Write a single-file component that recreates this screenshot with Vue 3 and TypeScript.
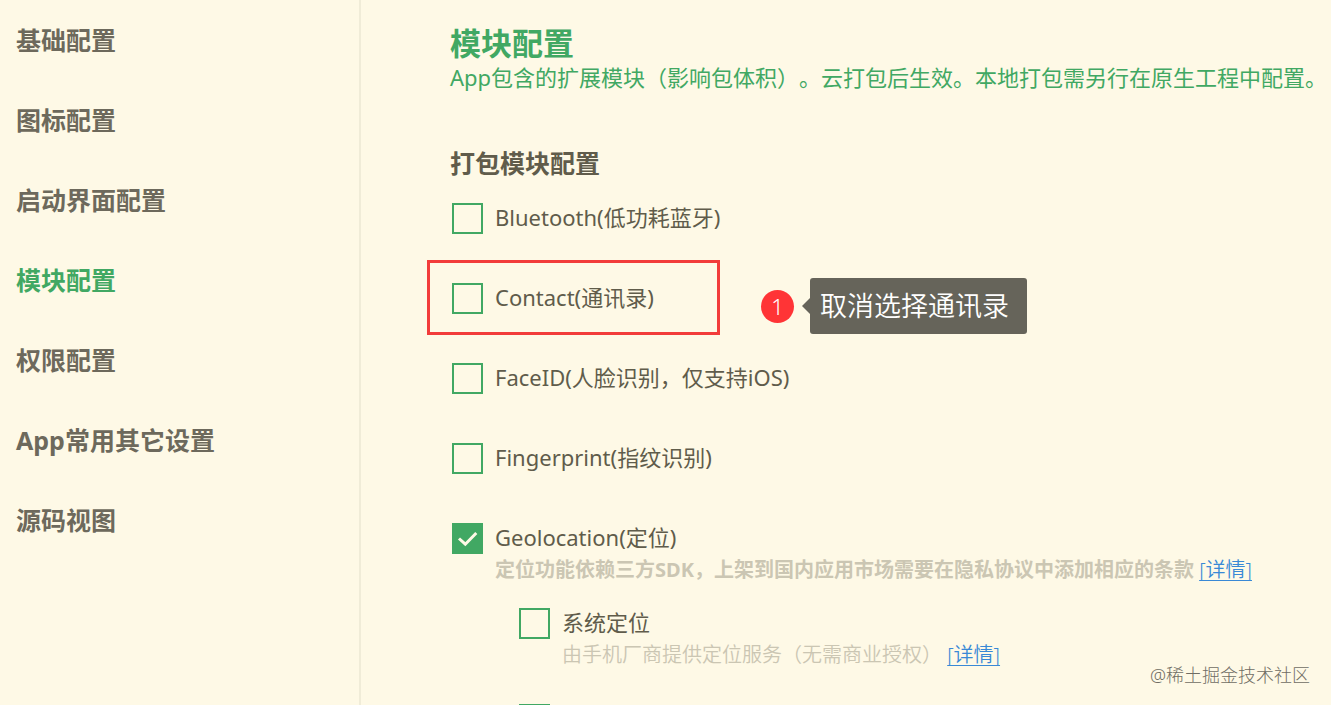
<script setup lang="ts">
import { ref } from 'vue'

interface Module {
  id: string
  label: string
  checked: boolean
  marked?: boolean
  hint?: string
  children?: Module[]
}

const sections = ['基础配置', '图标配置', '启动界面配置', '模块配置', '权限配置', 'App常用其它设置', '源码视图']
const active = ref('模块配置')

const modules = ref<Module[]>([
  { id: 'bluetooth', label: 'Bluetooth(低功耗蓝牙)', checked: false },
  { id: 'contact', label: 'Contact(通讯录)', checked: false, marked: true },
  { id: 'faceid', label: 'FaceID(人脸识别，仅支持iOS)', checked: false },
  { id: 'fingerprint', label: 'Fingerprint(指纹识别)', checked: false },
  {
    id: 'geolocation',
    label: 'Geolocation(定位)',
    checked: true,
    hint: '定位功能依赖三方SDK，上架到国内应用市场需要在隐私协议中添加相应的条款',
    children: [
      { id: 'system', label: '系统定位', checked: false, hint: '由手机厂商提供定位服务（无需商业授权）' },
      { id: 'other', label: '', checked: false },
    ],
  },
])
</script>

<template>
  <div class="page">
    <nav class="sidebar">
      <a
        v-for="name in sections"
        :key="name"
        href="#"
        :class="['section', { active: name === active }]"
        @click.prevent="active = name"
      >{{ name }}</a>
    </nav>

    <main class="content">
      <h1 class="title">模块配置</h1>
      <p class="intro">App包含的扩展模块（影响包体积）。云打包后生效。本地打包需另行在原生工程中配置。</p>

      <h2 class="subtitle">打包模块配置</h2>
      <ul class="modules">
        <li v-for="m in modules" :key="m.id" class="module">
          <div class="row">
            <input :id="m.id" v-model="m.checked" type="checkbox" class="box" />
            <label :id="m.id + '-label'" class="name" :for="m.id">{{ m.label }}</label>
          </div>
          <p v-if="m.hint" class="hint strong">{{ m.hint }} <a href="#" class="link">[详情]</a></p>
          <ul v-if="m.children" class="children">
            <li v-for="c in m.children" :key="c.id" class="child">
              <div class="row">
                <input
                  :id="c.id"
                  v-model="c.checked"
                  type="checkbox"
                  class="box"
                  :aria-labelledby="c.label ? undefined : m.id + '-label'"
                />
                <label v-if="c.label" class="name" :for="c.id">{{ c.label }}</label>
              </div>
              <p v-if="c.hint" class="hint">{{ c.hint }} <a href="#" class="link">[详情]</a></p>
            </li>
          </ul>
          <template v-if="m.marked">
            <div class="frame"></div>
            <div class="callout">
              <span class="number">1</span>
              <span class="bubble">取消选择通讯录</span>
            </div>
          </template>
        </li>
      </ul>
    </main>

    <div class="watermark">@稀土掘金技术社区</div>
  </div>
</template>

<style>
body {
  background: #fef9e6;
}
</style>

<style scoped>
.page {
  position: relative;
  display: flex;
  height: 100vh;
  overflow: hidden;
  box-sizing: border-box;
  background: #fef9e6;
  color: #605c4b;
  font-family: 'Noto Sans', 'Noto Sans CJK SC', sans-serif;
  font-size: 22px;
  font-weight: 350;
  text-spacing-trim: space-all;
}

h1, h2, p, ul {
  margin: 0;
  padding: 0;
}

ul {
  list-style: none;
}

.sidebar {
  flex: 0 0 359px;
  display: flex;
  flex-direction: column;
  border-right: 2px solid #f0ecd8;
}

.section {
  padding-left: 16px;
  line-height: 80px;
  font-size: 25px;
  font-weight: 700;
  color: #6d695c;
  text-decoration: none;
}

.section.active {
  color: #41a863;
}

.content {
  flex: 1;
  min-width: 0;
  padding: 24px 0 0 89px;
  white-space: nowrap;
}

.title {
  font-size: 31px;
  line-height: 38px;
  font-weight: 700;
  color: #41a863;
}

.intro {
  line-height: 30px;
  font-weight: 400;
  color: #41a863;
}

.subtitle {
  margin-top: 56px;
  font-size: 25px;
  line-height: 30px;
  font-weight: 700;
}

.module {
  position: relative;
  padding: 24px 0 24px 2px;
}

.row {
  display: flex;
  align-items: center;
  gap: 12px;
  height: 32px;
}

.name {
  padding-bottom: 4px;
  font-weight: 400;
}

.box {
  appearance: none;
  flex: none;
  width: 31px;
  height: 31px;
  margin: 0;
  border: 2px solid #41a863;
  background: transparent;
}

.box:checked {
  background: #41a863 url("data:image/svg+xml,%3Csvg xmlns='http://www.w3.org/2000/svg' viewBox='0 0 27 27'%3E%3Cpath d='M5 13.5l6.3 5.7L22.3 8' fill='none' stroke='%23fef9e6' stroke-width='3'/%3E%3C/svg%3E") center / 27px 27px no-repeat;
}

.hint {
  padding-left: 43px;
  font-size: 20px;
  line-height: 32px;
  color: #cbc6b3;
}

.hint.strong {
  font-weight: 700;
}

.link {
  font-weight: 350;
  color: #3989d6;
  text-decoration: underline;
  text-decoration-thickness: 1px;
  text-underline-offset: 3px;
}

.children {
  display: flex;
  flex-direction: column;
  gap: 32px;
  padding: 21px 0 0 67px;
}

.frame {
  position: absolute;
  top: 2px;
  left: -23px;
  width: 293px;
  height: 75px;
  box-sizing: border-box;
  border: 3px solid #f23c3a;
}

.callout {
  position: absolute;
  top: 20px;
  left: 311px;
  display: flex;
  align-items: center;
  gap: 16px;
}

.number {
  width: 33px;
  height: 33px;
  border-radius: 50%;
  background: #ff3436;
  color: #fff;
  font-size: 22px;
  line-height: 33px;
  text-align: center;
}

.bubble {
  position: relative;
  padding: 0 18px 0 10px;
  border-radius: 3px;
  background: #66645a;
  color: #fff;
  font-size: 27px;
  line-height: 56px;
}

.bubble::before {
  content: '';
  position: absolute;
  top: 20px;
  left: -8px;
  border: 8px solid transparent;
  border-left: 0;
  border-right-color: #66645a;
}

.watermark {
  position: absolute;
  right: 21px;
  bottom: 17px;
  font-size: 18px;
  line-height: 26px;
  font-weight: 300;
  color: #706d64;
}
</style>
